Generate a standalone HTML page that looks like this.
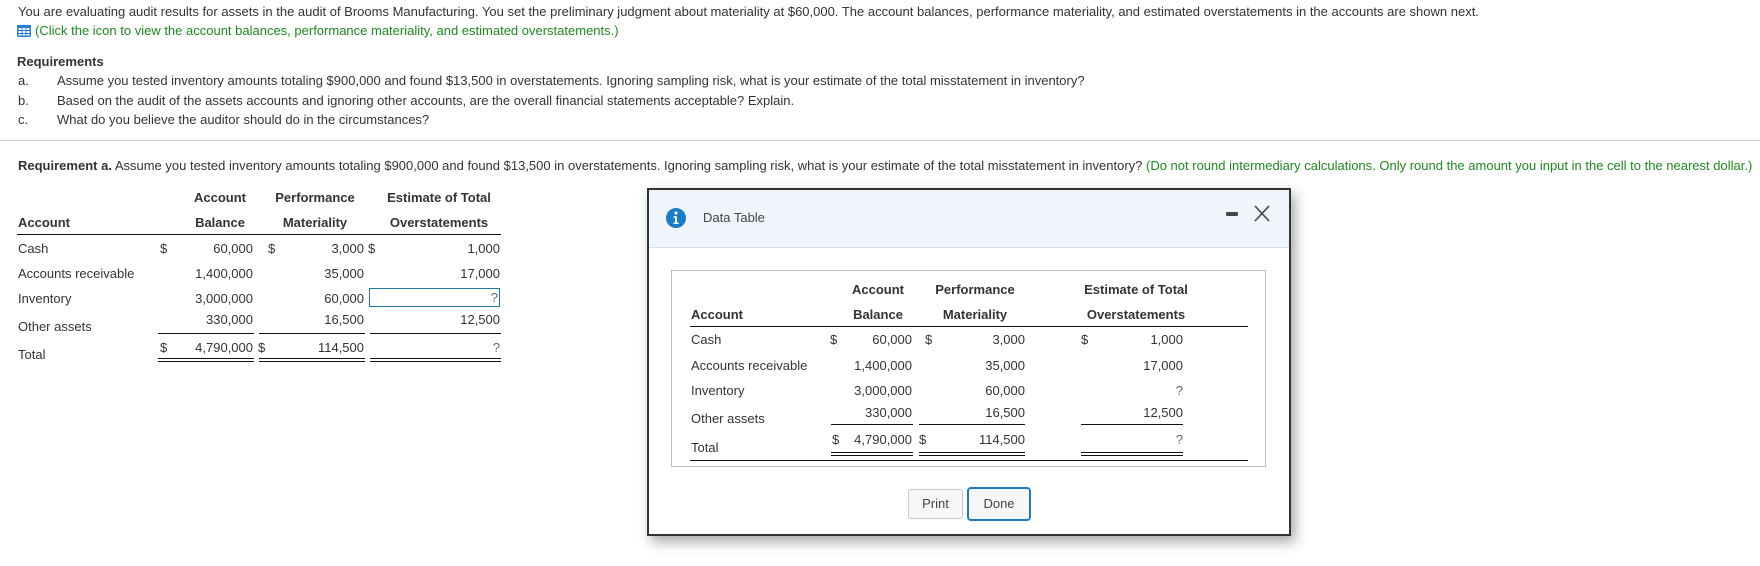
<!DOCTYPE html>
<html><head><meta charset="utf-8"><style>
body{margin:0;width:1760px;height:566px;background:#fff;position:relative;overflow:hidden;font-family:"Liberation Sans",Arial,sans-serif;font-size:13px;color:#333;}
.a{position:absolute;line-height:16px;white-space:nowrap;}
.r{position:absolute;line-height:16px;white-space:nowrap;text-align:right;}
.c{position:absolute;line-height:16px;white-space:nowrap;text-align:center;transform:translateX(-50%);}
.b{font-weight:bold;}
.g{color:#1e8a1e;}
.ln{position:absolute;height:0;border-top:1px solid #111;}
.dl{position:absolute;height:2px;border-top:1px solid #111;border-bottom:1px solid #111;}
</style></head><body>
<div class="a" style="left:18px;top:4px">You are evaluating audit results for assets in the audit of Brooms Manufacturing. You set the preliminary judgment about materiality at $60,000. The account balances, performance materiality, and estimated overstatements in the accounts are shown next.</div>
<svg style="position:absolute;left:17px;top:25px" width="14" height="12" viewBox="0 0 14 12"><rect x="0" y="0" width="14" height="12" rx="1.5" fill="#2a7fd4"/><g fill="#fff"><rect x="1.5" y="3" width="3" height="2"/><rect x="5.5" y="3" width="3" height="2"/><rect x="9.5" y="3" width="3" height="2"/><rect x="1.5" y="6" width="3" height="2"/><rect x="5.5" y="6" width="3" height="2"/><rect x="9.5" y="6" width="3" height="2"/><rect x="1.5" y="9" width="3" height="1.5"/><rect x="5.5" y="9" width="3" height="1.5"/><rect x="9.5" y="9" width="3" height="1.5"/></g></svg>
<div class="a g" style="left:35px;top:23px">(Click the icon to view the account balances, performance materiality, and estimated overstatements.)</div>
<div class="a b" style="left:17px;top:54px">Requirements</div>
<div class="a" style="left:18px;top:73px">a.</div><div class="a" style="left:57px;top:73px">Assume you tested inventory amounts totaling $900,000 and found $13,500 in overstatements. Ignoring sampling risk, what is your estimate of the total misstatement in inventory?</div>
<div class="a" style="left:18px;top:93px">b.</div><div class="a" style="left:57px;top:93px">Based on the audit of the assets accounts and ignoring other accounts, are the overall financial statements acceptable? Explain.</div>
<div class="a" style="left:18px;top:112px">c.</div><div class="a" style="left:57px;top:112px">What do you believe the auditor should do in the circumstances?</div>
<div style="position:absolute;left:0;top:140px;width:1760px;border-top:1px solid #ccc"></div>
<div class="a" style="left:18px;top:158px"><span class="b">Requirement a.</span> Assume you tested inventory amounts totaling $900,000 and found $13,500 in overstatements. Ignoring sampling risk, what is your estimate of the total misstatement in inventory? <span class="g">(Do not round intermediary calculations. Only round the amount you input in the cell to the nearest dollar.)</span></div>

<div class="c b" style="left:220px;top:190px">Account</div>
<div class="c b" style="left:315px;top:190px">Performance</div>
<div class="c b" style="left:439px;top:190px">Estimate of Total</div>
<div class="a b" style="left:18px;top:215px">Account</div>
<div class="c b" style="left:220px;top:215px">Balance</div>
<div class="c b" style="left:315px;top:215px">Materiality</div>
<div class="c b" style="left:439px;top:215px">Overstatements</div>
<div class="ln" style="left:17px;width:484px;top:234px"></div>
<div class="a" style="left:18px;top:241px">Cash</div><div class="a" style="left:160px;top:241px">$</div><div class="r" style="right:1507px;top:241px">60,000</div><div class="a" style="left:268px;top:241px">$</div><div class="r" style="right:1396px;top:241px">3,000</div><div class="a" style="left:368px;top:241px">$</div><div class="r" style="right:1260px;top:241px">1,000</div>
<div class="a" style="left:18px;top:266px">Accounts receivable</div><div class="r" style="right:1507px;top:266px">1,400,000</div><div class="r" style="right:1396px;top:266px">35,000</div><div class="r" style="right:1260px;top:266px">17,000</div>
<div class="a" style="left:18px;top:291px">Inventory</div><div class="r" style="right:1507px;top:291px">3,000,000</div><div class="r" style="right:1396px;top:291px">60,000</div>
<div style="position:absolute;left:369px;top:288px;width:129px;height:17px;border:1px solid #1b7a9c"></div><div class="r" style="right:1262px;top:290px;color:#666">?</div>
<div class="a" style="left:18px;top:319px">Other assets</div><div class="r" style="right:1507px;top:312px">330,000</div><div class="r" style="right:1396px;top:312px">16,500</div><div class="r" style="right:1260px;top:312px">12,500</div>
<div class="ln" style="left:158px;width:96px;top:333px"></div><div class="ln" style="left:259px;width:106px;top:333px"></div><div class="ln" style="left:370px;width:131px;top:333px"></div>
<div class="a" style="left:18px;top:347px">Total</div><div class="a" style="left:160px;top:340px">$</div><div class="r" style="right:1507px;top:340px">4,790,000</div><div class="a" style="left:258px;top:340px">$</div><div class="r" style="right:1396px;top:340px">114,500</div><div class="r" style="right:1260px;top:340px;color:#666">?</div>
<div class="dl" style="left:158px;width:96px;top:358px"></div><div class="dl" style="left:259px;width:106px;top:358px"></div><div class="dl" style="left:370px;width:131px;top:358px"></div>

<div style="position:absolute;left:647px;top:188px;width:640px;height:344px;border:2px solid #333;background:#fff;box-shadow:4px 6px 12px rgba(0,0,0,0.35)"></div>
<div style="position:absolute;left:649px;top:190px;width:640px;height:57px;background:#f0f5fc;border-bottom:1px solid #cfe0f0"></div>
<svg style="position:absolute;left:666px;top:208px" width="20" height="20" viewBox="0 0 20 20"><circle cx="10" cy="10" r="10" fill="#1a7cc9"/><circle cx="10" cy="5" r="1.6" fill="#fff"/><path d="M7.5 8.2h3.5v6.3h1.6v1.5H7.5v-1.5h1.6V9.7H7.5z" fill="#fff"/></svg>
<div class="a" style="left:703px;top:210px;color:#444">Data Table</div>
<div style="position:absolute;left:1226px;top:212px;width:12px;height:4px;background:#444;border-radius:1px"></div>
<svg style="position:absolute;left:1254px;top:205px" width="16" height="17" viewBox="0 0 16 17"><path d="M1 1L15 16M15 1L1 16" stroke="#444" stroke-width="1.6" fill="none"/></svg>
<div style="position:absolute;left:671px;top:270px;width:593px;height:195px;border:1px solid #bbb"></div>
<div class="c b" style="left:878px;top:282px">Account</div>
<div class="c b" style="left:975px;top:282px">Performance</div>
<div class="c b" style="left:1136px;top:282px">Estimate of Total</div>
<div class="a b" style="left:691px;top:307px">Account</div>
<div class="c b" style="left:878px;top:307px">Balance</div>
<div class="c b" style="left:975px;top:307px">Materiality</div>
<div class="c b" style="left:1136px;top:307px">Overstatements</div>
<div class="ln" style="left:690px;width:558px;top:326px"></div>
<div class="a" style="left:691px;top:332px">Cash</div><div class="a" style="left:830px;top:332px">$</div><div class="r" style="right:848px;top:332px">60,000</div><div class="a" style="left:925px;top:332px">$</div><div class="r" style="right:735px;top:332px">3,000</div><div class="a" style="left:1081px;top:332px">$</div><div class="r" style="right:577px;top:332px">1,000</div>
<div class="a" style="left:691px;top:358px">Accounts receivable</div><div class="r" style="right:848px;top:358px">1,400,000</div><div class="r" style="right:735px;top:358px">35,000</div><div class="r" style="right:577px;top:358px">17,000</div>
<div class="a" style="left:691px;top:383px">Inventory</div><div class="r" style="right:848px;top:383px">3,000,000</div><div class="r" style="right:735px;top:383px">60,000</div><div class="r" style="right:577px;top:383px;color:#666">?</div>
<div class="a" style="left:691px;top:411px">Other assets</div><div class="r" style="right:848px;top:405px">330,000</div><div class="r" style="right:735px;top:405px">16,500</div><div class="r" style="right:577px;top:405px">12,500</div>
<div class="ln" style="left:831px;width:82px;top:424px"></div><div class="ln" style="left:919px;width:106px;top:424px"></div><div class="ln" style="left:1081px;width:102px;top:424px"></div>
<div class="a" style="left:691px;top:440px">Total</div><div class="a" style="left:832px;top:432px">$</div><div class="r" style="right:848px;top:432px">4,790,000</div><div class="a" style="left:919px;top:432px">$</div><div class="r" style="right:735px;top:432px">114,500</div><div class="r" style="right:577px;top:432px;color:#666">?</div>
<div class="dl" style="left:831px;width:82px;top:452px"></div><div class="dl" style="left:919px;width:106px;top:452px"></div><div class="dl" style="left:1081px;width:102px;top:452px"></div>
<div class="ln" style="left:690px;width:558px;top:460px"></div>
<div style="position:absolute;left:908px;top:489px;width:53px;height:28px;border:1px solid #ccc;border-radius:3px;background:#f7f7f7;text-align:center;line-height:28px;color:#444">Print</div>
<div style="position:absolute;left:967px;top:487px;width:60px;height:30px;border:2px solid #1a7cc9;border-radius:4px;background:#f7f7f7;text-align:center;line-height:30px;color:#444">Done</div>
</body></html>
